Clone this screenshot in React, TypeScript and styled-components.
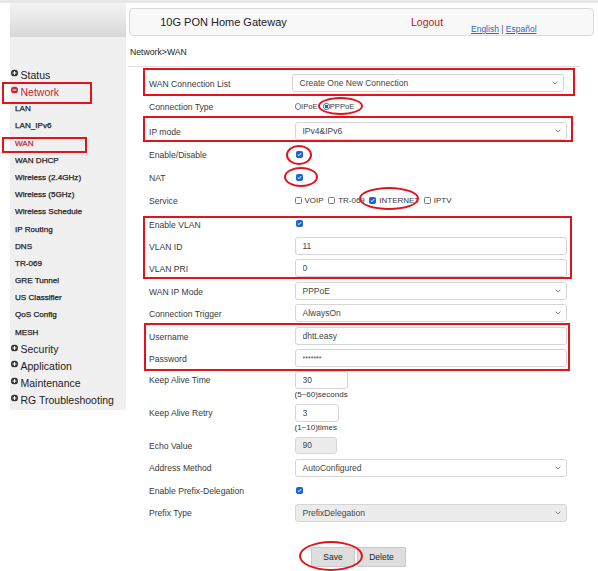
import styled, { createGlobalStyle } from "styled-components";

const red = "#e4121b";
const navRed = "#c0283c";
const blue = "#1b64d1";

const GlobalStyle = createGlobalStyle`
  html, body {
    margin: 0;
    padding: 0;
    background: #fff;
  }
  body {
    font-family: "Liberation Sans", Arial, sans-serif;
  }
`;

const Page = styled.div`
  position: relative;
  width: 598px;
  height: 571px;
  overflow: hidden;
  background: #fff;
`;

const TopStrip = styled.div`
  height: 3px;
  background: #e8e8e8;
`;

const Layout = styled.div`
  display: flex;
  padding-left: 10px;
`;

const Sidebar = styled.aside`
  width: 116px;
  flex: none;
`;

const SideHead = styled.div`
  height: 34px;
  background: linear-gradient(#f4f4f4, #d8d8d8);
`;

const SideNav = styled.nav`
  background: #f0f0f0;
  padding: 29.5px 0 2px;
`;

const NavGroup = styled.div<{ $active?: boolean }>`
  display: flex;
  align-items: center;
  height: 16.8px;
  padding-left: 1px;
  font-size: 10.5px;
  color: ${({ $active }) => ($active ? navRed : "#222")};
  svg {
    flex: none;
    margin-right: 2.5px;
    transform: translateY(-1.5px);
  }
`;

const NavItem = styled.div<{ $active?: boolean }>`
  display: flex;
  align-items: center;
  height: 17.2px;
  padding-left: 5px;
  font-size: 8.1px;
  color: ${({ $active }) => ($active ? navRed : "#222")};
  -webkit-text-stroke: 0.25px currentColor;
`;

const Main = styled.main`
  flex: 1;
  min-width: 0;
`;

const HeaderBar = styled.header`
  display: flex;
  align-items: center;
  box-sizing: border-box;
  width: 465px;
  height: 28px;
  margin: 5px 0 0 3px;
  padding-bottom: 1px;
  border: 1px solid #d9d9d9;
  border-radius: 4px;
  background: #f8f8f8;
`;

const Title = styled.div`
  width: 187px;
  text-align: center;
  font-size: 11px;
  color: #222;
`;

const Logout = styled.div`
  width: 60px;
  margin-left: 94px;
  font-size: 10.5px;
  color: #b0202c;
`;

const Lang = styled.div`
  align-self: flex-end;
  margin-bottom: 0;
  font-size: 8.5px;
  line-height: 10px;
  color: #555;
  a {
    color: #2a67c4;
    text-decoration: underline;
  }
`;

const Crumb = styled.div`
  margin: 10px 0 0 4px;
  font-size: 8.7px;
  line-height: 12px;
  color: #222;
`;

const Divider = styled.div`
  width: 452px;
  height: 1px;
  margin: 8px 0 0 2px;
  background: #dcdcdc;
`;

const Form = styled.div`
  padding: 4.5px 0 0 23px;
`;

const Row = styled.div<{ $h: number }>`
  display: flex;
  align-items: center;
  height: ${({ $h }) => $h}px;
`;

const TallRow = styled.div<{ $h: number; $pad: number }>`
  display: flex;
  align-items: flex-start;
  box-sizing: border-box;
  height: ${({ $h }) => $h}px;
  padding-top: ${({ $pad }) => $pad}px;
`;

const Label = styled.div<{ $fixed?: boolean }>`
  display: flex;
  align-items: center;
  align-self: ${({ $fixed }) => ($fixed ? "flex-start" : "stretch")};
  height: ${({ $fixed }) => ($fixed ? "18px" : "auto")};
  width: 145.5px;
  flex: none;
  padding-top: 1.5px;
  box-sizing: border-box;
  font-size: 8.6px;
  color: #3a3a3a;
`;

const Field = styled.div`
  display: flex;
  align-items: center;
`;

const Stack = styled.div`
  display: flex;
  flex-direction: column;
`;

const TextBox = styled.input<{ $w?: number; $h?: number; $gray?: boolean; $small?: boolean }>`
  box-sizing: border-box;
  width: ${({ $w }) => $w ?? 272.5}px;
  height: ${({ $h }) => $h ?? 18}px;
  margin: 0;
  padding: 0 7px;
  border: 1px solid #d5d5d5;
  border-radius: 3px;
  background: ${({ $gray }) => ($gray ? "#ececec" : "#fff")};
  font-family: "Liberation Sans", Arial, sans-serif;
  font-size: ${({ $small }) => ($small ? 7 : 8.5)}px;
  color: #444;
  outline: none;
`;

const SelectBox = styled.div<{ $shift?: number; $gray?: boolean }>`
  display: flex;
  align-items: center;
  justify-content: space-between;
  box-sizing: border-box;
  width: 272.5px;
  height: 18px;
  margin-left: ${({ $shift }) => $shift ?? 0}px;
  padding: 0 5px 0 7px;
  border: 1px solid #d5d5d5;
  border-radius: 3px;
  background: ${({ $gray }) => ($gray ? "#ececec" : "#fff")};
  font-size: 8.5px;
  color: #444;
`;

const Hint = styled.div`
  margin-top: 1px;
  font-size: 8px;
  line-height: 10px;
  color: #333;
`;

const CheckBox = styled.span<{ $on?: boolean }>`
  display: inline-flex;
  align-items: center;
  justify-content: center;
  flex: none;
  box-sizing: border-box;
  width: 7px;
  height: 7px;
  margin-left: 1.5px;
  border: 1px solid ${({ $on }) => ($on ? blue : "#777")};
  border-radius: 1.5px;
  background: ${({ $on }) => ($on ? blue : "#fff")};
`;

const Options = styled.div`
  display: flex;
  align-items: center;
  font-size: 8px;
  color: #3a3a3a;
`;

const Option = styled.label`
  display: flex;
  align-items: center;
  margin-right: 4.5px;
  span {
    margin-left: 0;
    margin-right: 3px;
  }
`;

const Radio = styled.span<{ $on?: boolean }>`
  display: inline-block;
  flex: none;
  box-sizing: border-box;
  width: 6.5px;
  height: 6.5px;
  border-radius: 50%;
  border: 1px solid ${({ $on }) => ($on ? blue : "#777")};
  background: ${({ $on }) =>
    $on ? `radial-gradient(circle, ${blue} 0 1.6px, #fff 1.9px)` : "#fff"};
`;

const RadioOption = styled.label`
  display: flex;
  align-items: center;
  margin-right: 5.5px;
  font-size: 7.7px;
  color: #3a3a3a;
`;

const Buttons = styled.div`
  display: flex;
  gap: 2px;
  margin: 24px 0 0 162px;
`;

const Button = styled.button<{ $w: number }>`
  box-sizing: border-box;
  width: ${({ $w }) => $w}px;
  height: 20px;
  padding: 0;
  border: 1px solid #c9c9c9;
  border-radius: 1px;
  background: #dedede;
  font-family: "Liberation Sans", Arial, sans-serif;
  font-size: 8.5px;
  color: #222;
`;

const Mark = styled.div<{
  $x: number;
  $y: number;
  $w: number;
  $h: number;
  $round?: boolean;
}>`
  position: absolute;
  left: ${({ $x }) => $x}px;
  top: ${({ $y }) => $y}px;
  width: ${({ $w }) => $w}px;
  height: ${({ $h }) => $h}px;
  box-sizing: border-box;
  border: 2px solid ${red};
  border-radius: ${({ $round }) => ($round ? "50%" : "0")};
  pointer-events: none;
`;

function ToggleIcon({ open }: { open?: boolean }) {
  const fill = open ? navRed : "#333";
  return (
    <svg width="7" height="7" viewBox="0 0 7 7">
      <circle cx="3.5" cy="3.5" r="3.5" fill={fill} />
      <path d="M1.6 3.5h3.8" stroke="#fff" strokeWidth="1.1" />
      {!open && <path d="M3.5 1.6v3.8" stroke="#fff" strokeWidth="1.1" />}
    </svg>
  );
}

function Chevron() {
  return (
    <svg width="6" height="4" viewBox="0 0 6 4">
      <path d="M0.6 0.6L3 3L5.4 0.6" fill="none" stroke="#777" strokeWidth="0.9" />
    </svg>
  );
}

function Check({ on }: { on?: boolean }) {
  return (
    <CheckBox $on={on}>
      {on && (
        <svg width="5" height="5" viewBox="0 0 5 5">
          <path d="M0.8 2.6L2 3.7L4.2 1.1" fill="none" stroke="#fff" strokeWidth="1" />
        </svg>
      )}
    </CheckBox>
  );
}

function Select({ value, shift, gray }: { value: string; shift?: number; gray?: boolean }) {
  return (
    <SelectBox $shift={shift} $gray={gray}>
      {value}
      <Chevron />
    </SelectBox>
  );
}

const networkItems = [
  "LAN",
  "LAN_IPv6",
  "WAN",
  "WAN DHCP",
  "Wireless (2.4GHz)",
  "Wireless (5GHz)",
  "Wireless Schedule",
  "IP Routing",
  "DNS",
  "TR-069",
  "GRE Tunnel",
  "US Classifier",
  "QoS Config",
  "MESH",
];

const laterGroups = ["Security", "Application", "Maintenance", "RG Troubleshooting"];

const services = [
  { name: "VOIP", on: false },
  { name: "TR-069", on: false },
  { name: "INTERNET", on: true },
  { name: "IPTV", on: false },
];

export default function App() {
  return (
    <Page>
      <GlobalStyle />
      <TopStrip />
      <Layout>
        <Sidebar>
          <SideHead />
          <SideNav>
            <NavGroup>
              <ToggleIcon />
              Status
            </NavGroup>
            <NavGroup $active>
              <ToggleIcon open />
              Network
            </NavGroup>
            {networkItems.map((item) => (
              <NavItem key={item} $active={item === "WAN"}>
                {item}
              </NavItem>
            ))}
            {laterGroups.map((g) => (
              <NavGroup key={g}>
                <ToggleIcon />
                {g}
              </NavGroup>
            ))}
          </SideNav>
        </Sidebar>

        <Main>
          <HeaderBar>
            <Title>10G PON Home Gateway</Title>
            <Logout>Logout</Logout>
            <Lang>
              <a>English</a> | <a>Español</a>
            </Lang>
          </HeaderBar>
          <Crumb>Network&gt;WAN</Crumb>
          <Divider />

          <Form>
            <Row $h={23}>
              <Label>WAN Connection List</Label>
              <Select value="Create One New Connection" shift={-3} />
            </Row>
            <Row $h={24}>
              <Label>Connection Type</Label>
              <Field>
                <RadioOption>
                  <Radio />
                  IPoE
                </RadioOption>
                <RadioOption>
                  <Radio $on />
                  PPPoE
                </RadioOption>
              </Field>
            </Row>
            <Row $h={24.5}>
              <Label>IP mode</Label>
              <Select value="IPv4&IPv6" />
            </Row>
            <Row $h={23}>
              <Label>Enable/Disable</Label>
              <Check on />
            </Row>
            <Row $h={22}>
              <Label>NAT</Label>
              <Check on />
            </Row>
            <Row $h={24}>
              <Label>Service</Label>
              <Options>
                {services.map((s) => (
                  <Option key={s.name}>
                    <Check on={s.on} />
                    {s.name}
                  </Option>
                ))}
              </Options>
            </Row>
            <Row $h={23.5}>
              <Label>Enable VLAN</Label>
              <Check on />
            </Row>
            <Row $h={21.5}>
              <Label>VLAN ID</Label>
              <TextBox readOnly value="11" />
            </Row>
            <Row $h={22.5}>
              <Label>VLAN PRI</Label>
              <TextBox readOnly value="0" />
            </Row>
            <Row $h={22.5}>
              <Label>WAN IP Mode</Label>
              <Select value="PPPoE" />
            </Row>
            <Row $h={22.5}>
              <Label>Connection Trigger</Label>
              <Select value="AlwaysOn" />
            </Row>
            <Row $h={22.5}>
              <Label>Username</Label>
              <TextBox readOnly value="dhtt.easy" />
            </Row>
            <Row $h={22.5}>
              <Label>Password</Label>
              <TextBox readOnly value="*******" $small />
            </Row>
            <TallRow $h={32.5} $pad={1}>
              <Label $fixed>Keep Alive Time</Label>
              <Stack>
                <TextBox readOnly value="30" $w={53} />
                <Hint>(5~60)seconds</Hint>
              </Stack>
            </TallRow>
            <TallRow $h={32} $pad={1.5}>
              <Label $fixed>Keep Alive Retry</Label>
              <Stack>
                <TextBox readOnly value="3" $w={44} />
                <Hint>(1~10)times</Hint>
              </Stack>
            </TallRow>
            <Row $h={22}>
              <Label>Echo Value</Label>
              <TextBox readOnly value="90" $w={42} $h={17} $gray />
            </Row>
            <Row $h={23}>
              <Label>Address Method</Label>
              <Select value="AutoConfigured" />
            </Row>
            <Row $h={23}>
              <Label>Enable Prefix-Delegation</Label>
              <Check on />
            </Row>
            <Row $h={21}>
              <Label>Prefix Type</Label>
              <Select value="PrefixDelegation" gray />
            </Row>
            <Buttons>
              <Button $w={44}>Save</Button>
              <Button $w={49}>Delete</Button>
            </Buttons>
          </Form>
        </Main>
      </Layout>

      <Mark $x={2} $y={82} $w={90} $h={22} />
      <Mark $x={2} $y={137} $w={85} $h={16} />
      <Mark $x={143} $y={68} $w={432} $h={28} />
      <Mark $x={318} $y={97} $w={45} $h={18} $round />
      <Mark $x={143} $y={116} $w={430} $h={26} />
      <Mark $x={286} $y={145} $w={26} $h={20} $round />
      <Mark $x={284} $y={167} $w={34} $h={20} $round />
      <Mark $x={359} $y={187} $w={60} $h={23} $round />
      <Mark $x={143} $y={216} $w={429} $h={63} />
      <Mark $x={144} $y={323} $w={426} $h={48} />
      <Mark $x={299} $y={541} $w={64} $h={30} $round />
    </Page>
  );
}
